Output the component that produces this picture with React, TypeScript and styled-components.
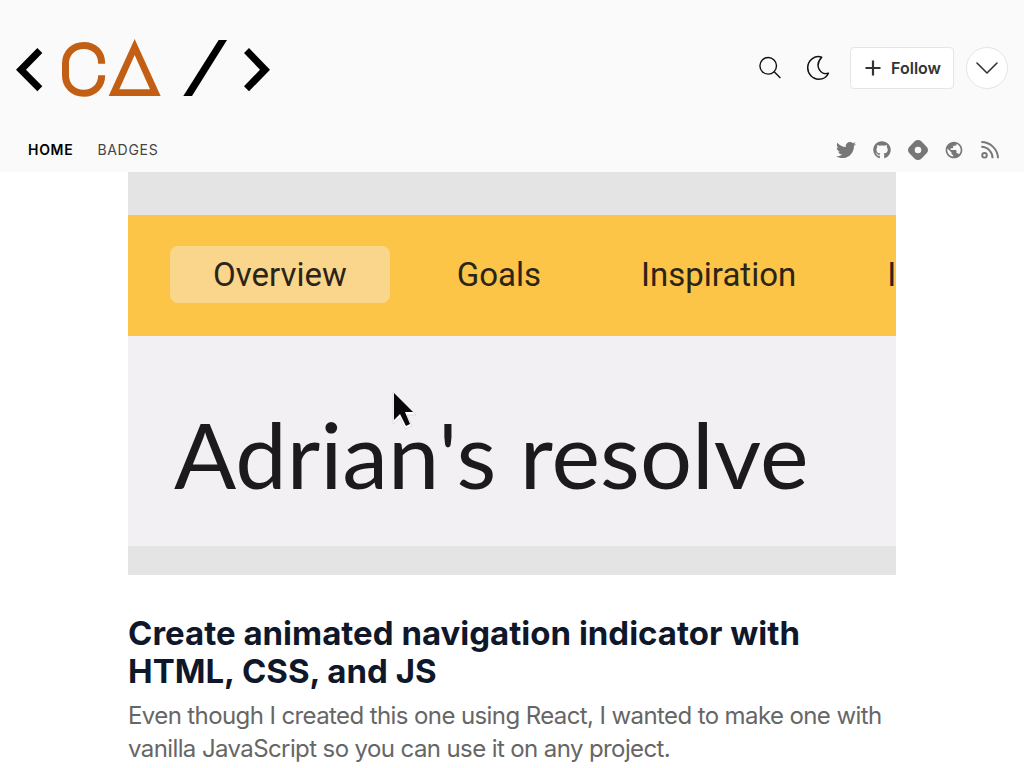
import React from "react";
import styled, { createGlobalStyle } from "styled-components";
import { FaTwitter, FaGithub } from "react-icons/fa";
import { MdPublic } from "react-icons/md";
import { SiHashnode } from "react-icons/si";

const GlobalStyle = createGlobalStyle`
  *, *::before, *::after { box-sizing: border-box; }
  body {
    margin: 0;
    background: #fff;
    color: #0f172a;
    font-family: Inter, "Liberation Sans", sans-serif;
    overflow-x: hidden;
  }
  a { color: inherit; text-decoration: none; }
  button { font: inherit; color: inherit; cursor: pointer; }
`;

const Header = styled.header`
  background: #fafafa;
`;

const TopRow = styled.div`
  display: flex;
  align-items: center;
  justify-content: space-between;
  padding: 38px 16px 30px;
`;

const LogoLink = styled.a`
  display: block;
  svg { display: block; }
`;

const Actions = styled.div`
  display: flex;
  align-items: center;
  gap: 12px;
`;

const IconGroup = styled.div`
  display: flex;
  gap: 8px;
`;

const IconButton = styled.button`
  display: flex;
  align-items: center;
  justify-content: center;
  width: 40px;
  height: 40px;
  padding: 0;
  border: 0;
  background: transparent;
`;

const FollowButton = styled.button`
  display: flex;
  align-items: center;
  gap: 10px;
  height: 42px;
  padding: 0 12px 0 14px;
  border: 1px solid #e5e5e5;
  border-radius: 4px;
  background: #fff;
  color: #333;
  font-size: 16px;
  font-weight: 600;
`;

const RoundButton = styled(IconButton)`
  width: 42px;
  height: 42px;
  border: 1px solid #e5e5e5;
  border-radius: 50%;
  background: #fff;
`;

const NavRow = styled.div`
  display: flex;
  align-items: center;
  justify-content: space-between;
  height: 44px;
  padding: 0 16px;
`;

const Nav = styled.nav`
  display: flex;
`;

const NavLink = styled.a<{ $active?: boolean }>`
  padding: 0 12px;
  font-size: 14px;
  line-height: 20px;
  letter-spacing: 0.05em;
  font-weight: ${(p) => (p.$active ? 600 : 400)};
  color: ${(p) => (p.$active ? "#000" : "#444")};
`;

const Socials = styled.div`
  display: flex;
  color: #777;
`;

const SocialLink = styled.a`
  display: flex;
  align-items: center;
  justify-content: center;
  width: 36px;
  height: 36px;
`;

const Article = styled.article`
  width: 75%;
  margin: 0 auto;
`;

const Cover = styled.div`
  position: relative;
  display: flex;
  flex-direction: column;
  padding: 43px 0 29px;
  background: #e4e4e4;
  overflow: hidden;
`;

const CoverTabs = styled.div`
  display: flex;
  align-items: center;
  gap: 34px;
  padding: 31px 0 33px 42px;
  background: #fcc548;
  overflow: hidden;
`;

const CoverTab = styled.span<{ $active?: boolean }>`
  flex: none;
  padding: 0 ${(p) => (p.$active ? 43 : 33)}px;
  border-radius: 8px;
  background: ${(p) => (p.$active ? "#f9d68c" : "transparent")};
  color: #2c2418;
  font-family: Roboto, sans-serif;
  font-size: 33px;
  line-height: 57px;

  &:last-child { padding-left: 24px; }
`;

const CoverBody = styled.div`
  height: 210px;
  padding: 68px 46px 0;
  background: #f3f0f4;
  color: #1c1a1d;
  font-family: Lato, sans-serif;
  font-size: 92px;
  line-height: 100px;
  white-space: nowrap;
`;

const Pointer = styled.svg`
  position: absolute;
  left: 34%;
  top: 216px;
`;

const Title = styled.h1`
  margin: 39px 0 0;
  font-size: 33px;
  line-height: 38px;
  font-weight: 700;
`;

const Brief = styled.p`
  margin: 9px 0 0;
  color: #666;
  font-size: 24px;
  line-height: 33px;
  font-weight: 400;
  letter-spacing: -0.025em;
`;

const Logo = () => (
  <svg width="254" height="60" viewBox="48 54 762 180" role="img" aria-label="CA">
    <path d="M48 149 112 84 127 99 78 149 127 199 112 214Z" />
    <path d="M810 149 747 84 732 99 780 149 732 199 747 214Z" />
    <path d="M656 60H681L576 228H550Z" />
    <path
      d="M305 131C305 97 282 76.500 251 76.500S196.500 99 196.500 131V166C196.500 198 220 220 251 220S305 198 305 166"
      fill="none" stroke="#c35f14" strokeWidth="21"
    />
    <path fillRule="evenodd" fill="#c35f14" d="M404 57 482 228H326ZM404 105 358 208H450Z" />
  </svg>
);

const SearchIcon = () => (
  <svg width="24" height="24" viewBox="0 0 24 24" fill="none" stroke="#111" strokeWidth="1.4">
    <circle cx="10.200" cy="9.800" r="8.300" />
    <path d="M16.200 15.800 22.400 22" />
  </svg>
);

const MoonIcon = () => (
  <svg width="24" height="26" viewBox="0 0 24 26" fill="none" stroke="#111" strokeWidth="1.500" strokeLinejoin="round">
    <path d="M15.700 2.300C9.500 -.2 1.700 4.600 1.700 12.800C1.700 19 6.600 24.200 12.700 24.200C17.200 24.200 21 21.600 22.400 18.200C14.800 20.600 7.600 11 15.700 2.300Z" />
  </svg>
);

const PlusIcon = () => (
  <svg width="16" height="16" viewBox="0 0 16 16" stroke="#333" strokeWidth="2.200">
    <path d="M8 .5V15.500M.5 8H15.500" />
  </svg>
);

const ChevronIcon = () => (
  <svg width="22" height="14" viewBox="0 0 22 14" fill="none" stroke="#333" strokeWidth="1.600" strokeLinecap="round" strokeLinejoin="round">
    <path d="M1 2 11 12 21 2" />
  </svg>
);

const RssIcon = () => (
  <svg width="18" height="18" viewBox="0 0 18 18" fill="none" stroke="currentColor" strokeWidth="1.900">
    <circle cx="3.500" cy="14.300" r="2.300" />
    <path d="M.3 5.700C6.600 5.700 11.600 10.900 11.600 17.300M.3 1C9.400 1 17 8.400 17 17.300" />
  </svg>
);

const socials = [
  { label: "Twitter", icon: <FaTwitter size={20} /> },
  { label: "GitHub", icon: <FaGithub size={18} /> },
  { label: "Hashnode", icon: <SiHashnode size={20} /> },
  { label: "Website", icon: <MdPublic size={20} /> },
  { label: "RSS feed", icon: <RssIcon /> },
];

export default function App() {
  return (
    <>
      <GlobalStyle />
      <Header>
        <TopRow>
          <LogoLink href="#"><Logo /></LogoLink>
          <Actions>
            <IconGroup>
              <IconButton aria-label="Search"><SearchIcon /></IconButton>
              <IconButton aria-label="Dark mode"><MoonIcon /></IconButton>
            </IconGroup>
            <FollowButton><PlusIcon />Follow</FollowButton>
            <RoundButton aria-label="More"><ChevronIcon /></RoundButton>
          </Actions>
        </TopRow>
        <NavRow>
          <Nav>
            <NavLink href="#" $active>HOME</NavLink>
            <NavLink href="#">BADGES</NavLink>
          </Nav>
          <Socials>
            {socials.map((s) => (
              <SocialLink key={s.label} href="#" aria-label={s.label}>{s.icon}</SocialLink>
            ))}
          </Socials>
        </NavRow>
      </Header>
      <main>
        <Article>
          <Cover>
            <CoverTabs>
              <CoverTab $active>Overview</CoverTab>
              <CoverTab>Goals</CoverTab>
              <CoverTab>Inspiration</CoverTab>
              <CoverTab>I</CoverTab>
            </CoverTabs>
            <CoverBody>Adrian's resolve</CoverBody>
            <Pointer width="30" height="46" viewBox="0 0 30 46">
              <path d="M4 4V36L11 30 16 41 23 38 18 27H27Z" fill="#fff" stroke="#ddd" />
              <path d="M5 5V32L11 26 17 38 21 36 16 24H24Z" fill="#080808" />
            </Pointer>
          </Cover>
          <Title>Create animated navigation indicator with HTML, CSS, and JS</Title>
          <Brief>
            Even though I created this one using React, I wanted to make one with
            vanilla JavaScript so you can use it on any project.
          </Brief>
        </Article>
      </main>
    </>
  );
}
